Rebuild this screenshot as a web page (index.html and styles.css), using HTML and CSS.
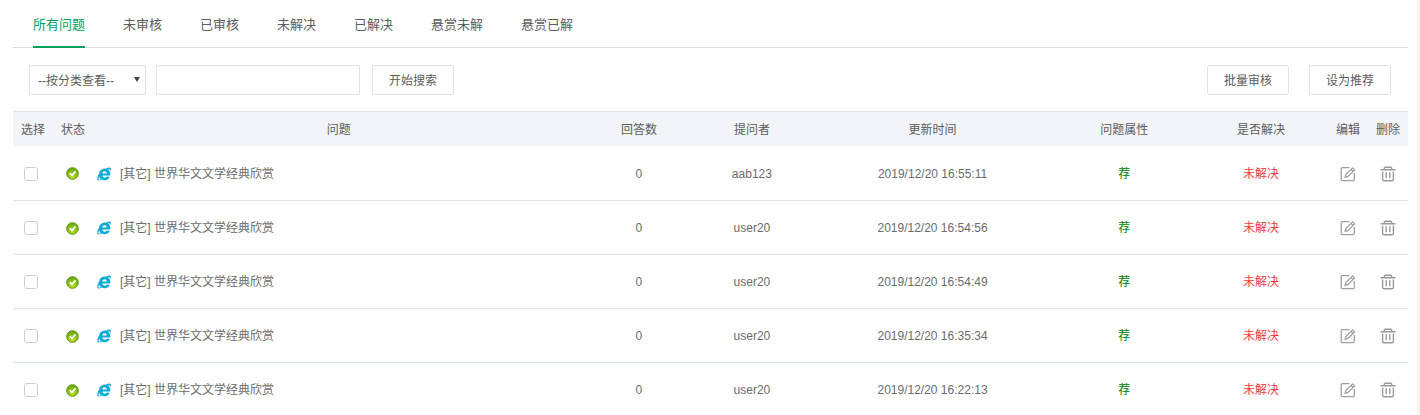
FILE: index.html
```html
<!DOCTYPE html>
<html lang="zh-CN">
<head>
    <meta charset="UTF-8">
    <meta name="viewport" content="width=device-width, initial-scale=1.0">
    <title>所有问题</title>
    <link rel="stylesheet" href="styles.css">
</head>
<body>
    <!-- Shared icons -->
    <svg class="icon-defs" aria-hidden="true">
        <defs>
            <radialGradient id="okFill" cx="50%" cy="80%" r="70%">
                <stop offset="0" stop-color="#b9e01c"/>
                <stop offset="1" stop-color="#6cab10"/>
            </radialGradient>
        </defs>
        <symbol id="icon-ok" viewBox="0 0 13 13">
            <circle cx="6.5" cy="6.5" r="5.8" fill="url(#okFill)" stroke="#5c9416" stroke-width="1"/>
            <path d="M3.7 6.2 L6 8.4 L9.5 4.4" fill="none" stroke="#fff" stroke-width="1.7"/>
        </symbol>
        <symbol id="icon-ie" viewBox="0 0 14 14">
            <path fill="#0eaad6" fill-rule="evenodd" d="M13.2 8.6 H5.4 C5.5 10 6.4 10.7 7.6 10.7 C8.5 10.7 9.2 10.4 9.6 9.8 H12.9 C12.1 12 10.1 13.2 7.6 13.2 C6.6 13.2 5.7 13 4.9 12.6 C3.2 13.7 1.5 14 .7 13 C-.5 11.4 .8 7.6 3.6 4.9 C2.9 5.4 2.3 6 1.8 6.7 C2.4 3.7 4.6 1.6 7.7 1.6 C8.2 1.6 8.6 1.6 9 1.7 C10.8 .6 12.6 .2 13.4 1 C14 1.6 13.9 2.8 13.4 4.2 C13.2 2.4 12.3 1.9 10.6 2.3 C12.6 3.3 13.6 5.6 13.2 8.6 Z M5.4 6.4 H9.8 C9.7 5 8.9 4.2 7.6 4.2 C6.3 4.2 5.5 5 5.4 6.4 Z M2.2 9.4 C1.2 11.3 1.3 12.4 2.1 12.7 C2.7 12.9 3.3 12.7 4 12.1 C3 11.4 2.4 10.5 2.2 9.4 Z"/>
        </symbol>
        <symbol id="icon-edit" viewBox="0 0 16 16">
            <path d="M9.5 1.7 H2.2 Q1.2 1.7 1.2 2.7 V13.6 Q1.2 14.6 2.2 14.6 H13.3 Q14.3 14.6 14.3 13.6 V7" fill="none" stroke="#a0a0a0" stroke-width="1.3"/>
            <path d="M5.2 11.2 L6 8.4 L12.6 1.9 L14.6 3.9 L8 10.4 Z M11 3.5 L13 5.5" fill="none" stroke="#a0a0a0" stroke-width="1.3"/>
        </symbol>
        <symbol id="icon-trash" viewBox="0 0 16 16">
            <path d="M.5 3.8 H15.5 M4.3 3.6 V2.2 Q4.3 1.2 5.3 1.2 H10.7 Q11.7 1.2 11.7 2.2 V3.6" fill="none" stroke="#999" stroke-width="1.4"/>
            <path d="M2.6 5.6 V13.4 Q2.6 14.8 4 14.8 H12 Q13.4 14.8 13.4 13.4 V5.6 M6.2 6.3 V12.3 M9.8 6.3 V12.3" fill="none" stroke="#999" stroke-width="1.4"/>
        </symbol>
    </svg>

    <div class="panel">
        <!-- Tabs -->
        <nav class="tabs">
            <a href="#" class="tab active">所有问题</a>
            <a href="#" class="tab">未审核</a>
            <a href="#" class="tab">已审核</a>
            <a href="#" class="tab">未解决</a>
            <a href="#" class="tab">已解决</a>
            <a href="#" class="tab">悬赏未解</a>
            <a href="#" class="tab">悬赏已解</a>
        </nav>

        <!-- Search and bulk actions -->
        <form class="toolbar" onsubmit="return false">
            <div class="filters">
                <div class="select-box">
                    <select class="category" aria-label="按分类查看">
                        <option>--按分类查看--</option>
                    </select>
                </div>
                <input type="text" class="keyword" aria-label="关键词">
            </div>
            <button type="submit" class="btn">开始搜索</button>
            <div class="bulk">
                <button type="button" class="btn">批量审核</button>
                <button type="button" class="btn">设为推荐</button>
            </div>
        </form>

        <!-- Questions -->
        <table class="questions">
            <colgroup>
                <col class="col-small">
                <col class="col-small">
                <col>
                <col class="col-answers">
                <col class="col-user">
                <col class="col-time">
                <col class="col-attr">
                <col class="col-solved">
                <col class="col-small">
                <col class="col-small">
            </colgroup>
            <thead>
                <tr>
                    <th>选择</th>
                    <th>状态</th>
                    <th>问题</th>
                    <th>回答数</th>
                    <th>提问者</th>
                    <th>更新时间</th>
                    <th>问题属性</th>
                    <th>是否解决</th>
                    <th>编辑</th>
                    <th>删除</th>
                </tr>
            </thead>
            <tbody id="questionRows"></tbody>
        </table>
    </div>

    <script>
        const questions = [
            { user: 'aab123', time: '2019/12/20 16:55:11' },
            { user: 'user20', time: '2019/12/20 16:54:56' },
            { user: 'user20', time: '2019/12/20 16:54:49' },
            { user: 'user20', time: '2019/12/20 16:35:34' },
            { user: 'user20', time: '2019/12/20 16:22:13' }
        ];

        document.getElementById('questionRows').innerHTML = questions.map(q => `
            <tr>
                <td><input type="checkbox" class="check" aria-label="选择"></td>
                <td><svg class="icon-ok"><use href="#icon-ok"/></svg></td>
                <td>
                    <a href="#" class="title">
                        <svg class="icon-ie"><use href="#icon-ie"/></svg>
                        <span>[其它] 世界华文文学经典欣赏</span>
                    </a>
                </td>
                <td>0</td>
                <td>${q.user}</td>
                <td>${q.time}</td>
                <td class="recommended">荐</td>
                <td class="unsolved">未解决</td>
                <td><button type="button" class="icon-btn" aria-label="编辑"><svg><use href="#icon-edit"/></svg></button></td>
                <td><button type="button" class="icon-btn" aria-label="删除"><svg><use href="#icon-trash"/></svg></button></td>
            </tr>
        `).join('');
    </script>
</body>
</html>
```
FILE: styles.css
```css
:root {
    --green: #009f5d;
    --text: #5c5c5c;
    --text-light: #6b6b6b;
    --border: #dde4e6;
    --white: #ffffff;
}

* {
    margin: 0;
    padding: 0;
    box-sizing: border-box;
}

body {
    font-family: "Liberation Sans", "Noto Sans CJK SC", sans-serif;
    font-size: 12px;
    line-height: 18px;
    color: var(--text);
    background: #f4f4f4;
}

a {
    color: inherit;
    text-decoration: none;
}

svg {
    display: block;
}

.icon-defs {
    position: absolute;
    width: 0;
    height: 0;
}

.panel {
    min-height: 100vh;
    margin-right: 3px;
    padding: 0 9px 0 13px;
    background: var(--white);
}

.tabs {
    display: flex;
    gap: 38px;
    padding: 0 20px;
    border-bottom: 1px solid #d5dcdc;
}

.tab {
    margin-bottom: -1px;
    padding: 16px 0 12px;
    font-size: 13px;
    border-bottom: 2px solid transparent;
}

.tab.active {
    color: var(--green);
    border-bottom-color: var(--green);
}

.toolbar {
    display: flex;
    align-items: center;
    gap: 12px;
    padding: 17px 17px 16px 16px;
}

.filters {
    display: flex;
    gap: 10px;
}

.select-box {
    position: relative;
}

.select-box::after {
    content: "";
    position: absolute;
    top: 12px;
    right: 6px;
    border: 3px solid transparent;
    border-top: 5px solid #444;
    border-bottom: 0;
    pointer-events: none;
}

.category,
.keyword,
.btn {
    display: block;
    height: 30px;
    font: inherit;
    color: var(--text);
    background: var(--white);
    border: 1px solid var(--border);
}

.category,
.btn {
    padding: 1px 16px 0;
    border-radius: 2px;
    cursor: pointer;
}

.category {
    width: 117px;
    padding: 1px 8px 0;
    appearance: none;
}

.keyword {
    width: 204px;
    padding: 0 8px;
}

.bulk {
    display: flex;
    gap: 20px;
    margin-left: auto;
}

.questions {
    width: 100%;
    table-layout: fixed;
    border-collapse: collapse;
}

.col-small {
    width: 40px;
}

.col-answers {
    width: 7.8%;
}

.col-user {
    width: 8.4%;
}

.col-time {
    width: 17.5%;
}

.col-attr {
    width: 10%;
}

.col-solved {
    width: 9.6%;
}

.questions th {
    padding: 9px 0 7px;
    font-weight: normal;
    background: #f2f4f8;
    border-top: 1px solid var(--border);
}

.questions td {
    height: 54px;
    padding: 2px 4px 0;
    text-align: center;
    color: var(--text-light);
    border-bottom: 1px solid var(--border);
}

.check {
    display: block;
    width: 14px;
    height: 14px;
    margin-left: 7px;
    appearance: none;
    background: var(--white);
    border: 1px solid #c9cfd1;
    border-radius: 3px;
}

.check:checked {
    background: var(--green);
}

.icon-ok {
    width: 13px;
    height: 13px;
    margin-left: 9px;
}

.title {
    display: flex;
    align-items: center;
    gap: 9px;
}

.icon-ie {
    width: 14px;
    height: 14px;
}

.questions .recommended {
    color: #008000;
}

.questions .unsolved {
    color: #f03a3a;
}

.icon-btn {
    display: block;
    margin: 0 auto;
    background: none;
    border: 0;
    cursor: pointer;
}

.icon-btn svg {
    width: 16px;
    height: 16px;
}
```
